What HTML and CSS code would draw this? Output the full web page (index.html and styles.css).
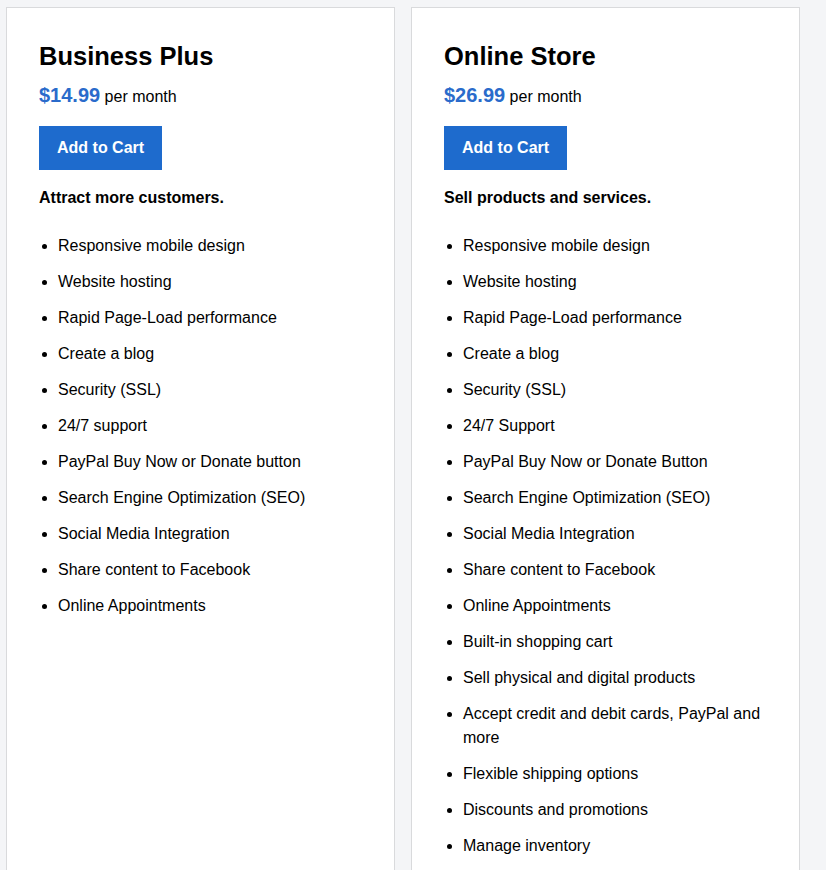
FILE: index.html
```html
<!DOCTYPE html>
<html lang="en">

<head>
    <meta charset="UTF-8">
    <meta name="viewport" content="width=device-width, initial-scale=1.0">
    <title>Plans</title>
    <link rel="stylesheet" href="styles.css">
</head>

<body>
    <div class="plans">
        <div class="plan">
            <h2 class="plan-title">Business Plus</h2>
            <p class="plan-price"><span class="amount">$14.99</span> per month</p>
            <button class="add-cart">Add to Cart</button>
            <p class="plan-tagline">Attract more customers.</p>
            <ul class="plan-features">
                <li>Responsive mobile design</li>
                <li>Website hosting</li>
                <li>Rapid Page-Load performance</li>
                <li>Create a blog</li>
                <li>Security (SSL)</li>
                <li>24/7 support</li>
                <li>PayPal Buy Now or Donate button</li>
                <li>Search Engine Optimization (SEO)</li>
                <li>Social Media Integration</li>
                <li>Share content to Facebook</li>
                <li>Online Appointments</li>
            </ul>
        </div>
        <div class="plan">
            <h2 class="plan-title">Online Store</h2>
            <p class="plan-price"><span class="amount">$26.99</span> per month</p>
            <button class="add-cart">Add to Cart</button>
            <p class="plan-tagline">Sell products and services.</p>
            <ul class="plan-features">
                <li>Responsive mobile design</li>
                <li>Website hosting</li>
                <li>Rapid Page-Load performance</li>
                <li>Create a blog</li>
                <li>Security (SSL)</li>
                <li>24/7 Support</li>
                <li>PayPal Buy Now or Donate Button</li>
                <li>Search Engine Optimization (SEO)</li>
                <li>Social Media Integration</li>
                <li>Share content to Facebook</li>
                <li>Online Appointments</li>
                <li>Built-in shopping cart</li>
                <li>Sell physical and digital products</li>
                <li>Accept credit and debit cards, PayPal and more</li>
                <li>Flexible shipping options</li>
                <li>Discounts and promotions</li>
                <li>Manage inventory</li>
            </ul>
        </div>
    </div>
</body>

</html>
```

FILE: styles.css
```css
body {
    margin: 0;
    background-color: #f4f5f7;
    font-family: "Liberation Sans", Arial, sans-serif;
    color: #000;
}

.plans {
    display: grid;
    grid-template-columns: 389px 389px; /* duas colunas iguais */
    gap: 16px;
    padding: 7px 0 0 6px;
}

.plan {
    background-color: #fff;
    border: 1px solid #d9dadc;
    padding: 33px 32px 40px;
}

.plan-title {
    margin: 0;
    font-size: 25.5px;
    line-height: 30px;
    font-weight: bold;
}

.plan-price {
    margin: 12px 0 0;
    font-size: 16px;
    line-height: 24px;
}

.plan-price .amount {
    color: #2a6bcb;
    font-size: 20px;
    font-weight: bold;
}

.add-cart {
    display: block;
    margin-top: 17px;
    padding: 12px 18px;
    border: none;
    border-radius: 0;
    background-color: #1e6bcd;
    color: #fff;
    font-family: inherit;
    font-size: 16px;
    line-height: 20px;
    font-weight: bold;
    cursor: pointer;
}

.plan-tagline {
    margin: 16px 0 0;
    font-size: 16px;
    line-height: 24px;
    font-weight: bold;
}

.plan-features {
    margin: 24px 0 0;
    padding-left: 19px;
    font-size: 16px;
    line-height: 24px;
}

.plan-features li {
    margin-bottom: 12px;
}
```
